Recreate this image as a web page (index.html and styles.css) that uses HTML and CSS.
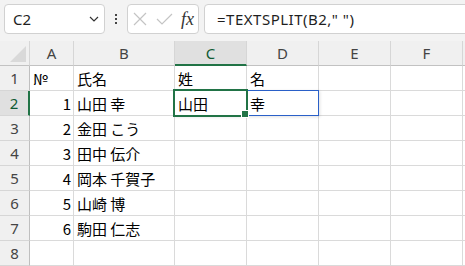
FILE: index.html
```html
<!DOCTYPE html>
<html lang="ja">
<head>
    <meta charset="UTF-8">
    <title>TEXTSPLIT</title>
    <link rel="stylesheet" href="styles.css">
</head>
<body>
    <div class="toolbar">
        <div class="namebox">
            <span class="name">C2</span>
            <svg class="chevron" width="10" height="6" viewBox="0 0 10 6"><path d="M1 1 L5 5 L9 1" fill="none" stroke="#333" stroke-width="1.2"/></svg>
        </div>
        <div class="grip"><span></span><span></span><span></span></div>
        <div class="fxbox">
            <svg width="14" height="14" viewBox="0 0 14 14"><path d="M1 1 L13 13 M13 1 L1 13" stroke="#c4c4c4" stroke-width="1.2"/></svg>
            <svg width="17" height="12" viewBox="0 0 17 12"><path d="M1 6 L6 11 L16 1" fill="none" stroke="#c4c4c4" stroke-width="1.2"/></svg>
            <span class="fx">fx</span>
        </div>
        <div class="formula">=TEXTSPLIT(B2," ")</div>
    </div>

    <div class="sheet">
        <div class="grid">
            <div class="hd corner"></div>
            <div class="hd">A</div>
            <div class="hd">B</div>
            <div class="hd active-col">C</div>
            <div class="hd">D</div>
            <div class="hd">E</div>
            <div class="hd">F</div>
            <div class="hd"></div>

            <div class="rh">1</div>
            <div class="cell">№</div>
            <div class="cell">氏名</div>
            <div class="cell">姓</div>
            <div class="cell">名</div>
            <div class="cell"></div>
            <div class="cell"></div>
            <div class="cell"></div>

            <div class="rh active-row">2</div>
            <div class="cell num">1</div>
            <div class="cell">山田 幸</div>
            <div class="cell">山田</div>
            <div class="cell">幸</div>
            <div class="cell"></div>
            <div class="cell"></div>
            <div class="cell"></div>

            <div class="rh">3</div>
            <div class="cell num">2</div>
            <div class="cell">金田 こう</div>
            <div class="cell"></div>
            <div class="cell"></div>
            <div class="cell"></div>
            <div class="cell"></div>
            <div class="cell"></div>

            <div class="rh">4</div>
            <div class="cell num">3</div>
            <div class="cell">田中 伝介</div>
            <div class="cell"></div>
            <div class="cell"></div>
            <div class="cell"></div>
            <div class="cell"></div>
            <div class="cell"></div>

            <div class="rh">5</div>
            <div class="cell num">4</div>
            <div class="cell">岡本 千賀子</div>
            <div class="cell"></div>
            <div class="cell"></div>
            <div class="cell"></div>
            <div class="cell"></div>
            <div class="cell"></div>

            <div class="rh">6</div>
            <div class="cell num">5</div>
            <div class="cell">山崎 博</div>
            <div class="cell"></div>
            <div class="cell"></div>
            <div class="cell"></div>
            <div class="cell"></div>
            <div class="cell"></div>

            <div class="rh">7</div>
            <div class="cell num">6</div>
            <div class="cell">駒田 仁志</div>
            <div class="cell"></div>
            <div class="cell"></div>
            <div class="cell"></div>
            <div class="cell"></div>
            <div class="cell"></div>

            <div class="rh">8</div>
            <div class="cell"></div>
            <div class="cell"></div>
            <div class="cell"></div>
            <div class="cell"></div>
            <div class="cell"></div>
            <div class="cell"></div>
            <div class="cell"></div>
        </div>

        <!-- spill range C2:D2 and active cell -->
        <div class="spill"></div>
        <div class="selection"><span class="handle"></span></div>
    </div>
</body>
</html>
```

FILE: styles.css
```css
body {
    margin: 0;
    width: 465px;
    height: 266px;
    overflow: hidden;
    background: #ffffff;
    font-family: 'Noto Sans', 'Open Sans', sans-serif;
}
.toolbar {
    display: flex;
    align-items: flex-start;
    height: 41px;
    padding: 4px 0 0 4px;
    box-sizing: border-box;
    background: #f3f3f3;
    overflow: hidden;
}
.namebox {
    display: flex;
    align-items: center;
    justify-content: space-between;
    width: 101px;
    height: 30px;
    padding: 0 5px 0 8px;
    box-sizing: border-box;
    background: #ffffff;
    border: 1px solid #d1d1d1;
    border-radius: 4px;
}
.name {
    font-size: 15px;
    color: #1f1f1f;
}
.grip {
    display: flex;
    flex-direction: column;
    align-items: center;
    gap: 2px;
    width: 22px;
    padding-top: 10px;
}
.grip span {
    width: 2px;
    height: 2px;
    background: #444;
}
.fxbox {
    display: flex;
    align-items: center;
    justify-content: space-between;
    width: 72px;
    height: 30px;
    padding: 0 4px 0 5px;
    box-sizing: border-box;
    background: #ffffff;
    border: 1px solid #d1d1d1;
    border-radius: 4px;
}
.fx {
    font-family: 'Liberation Serif', serif;
    font-style: italic;
    font-size: 18px;
    color: #333;
}
.formula {
    flex: 1;
    margin: 0 -10px 0 5px;
    height: 30px;
    line-height: 28px;
    padding-left: 12px;
    box-sizing: border-box;
    background: #ffffff;
    border: 1px solid #d1d1d1;
    border-radius: 4px;
    font-size: 15px;
    letter-spacing: 0.5px;
    color: #1f1f1f;
    white-space: nowrap;
}
.sheet {
    position: relative;
}
.grid {
    display: grid;
    grid-template-columns: 30px 44px 101px 72px 72px 72px 72px 1fr;
    grid-auto-rows: 25px;
}
.grid > div {
    box-sizing: border-box;
    border-right: 1px solid #dadada;
    border-bottom: 1px solid #dadada;
    display: flex;
    align-items: center;
    overflow: hidden;
    white-space: nowrap;
}
.grid > .hd {
    justify-content: center;
    background: #f0f0f0;
    border-right-color: #d6d6d6;
    border-bottom-color: #c2c2c2;
    font-size: 15px;
    color: #444;
}
.grid > .rh {
    justify-content: center;
    background: #f0f0f0;
    border-right-color: #bfbfbf;
    border-bottom-color: #d6d6d6;
    font-size: 15px;
    color: #444;
}
.corner {
    position: relative;
}
.corner::after {
    content: '';
    position: absolute;
    right: 3px;
    bottom: 3px;
    width: 16px;
    height: 16px;
    background: #d9d9d9;
    clip-path: polygon(100% 0, 100% 100%, 0 100%);
}
.grid > .active-col {
    background: #e0e0e0;
    color: #0f5a32;
    border-bottom: 2px solid #217346;
}
.grid > .active-row {
    background: #e0e0e0;
    color: #0f5a32;
    border-right: 2px solid #217346;
}
.cell {
    padding: 0 3px;
    font-family: 'Noto Sans CJK JP', 'Noto Sans', sans-serif;
    font-size: 15px;
    color: #000;
}
.grid > .num {
    justify-content: flex-end;
    padding-right: 2px;
}
.spill {
    position: absolute;
    left: 174px;
    top: 49px;
    width: 145px;
    height: 26px;
    box-sizing: border-box;
    border: 1px solid #2a60c8;
    box-shadow: 1px 1px 3px rgba(0, 0, 0, 0.12);
}
.selection {
    position: absolute;
    left: 173px;
    top: 48px;
    width: 75px;
    height: 28px;
    box-sizing: border-box;
    border: 2px solid #217346;
}
.handle {
    position: absolute;
    right: -3px;
    bottom: -3px;
    width: 6px;
    height: 6px;
    background: #217346;
    border: 1px solid #ffffff;
}
```
